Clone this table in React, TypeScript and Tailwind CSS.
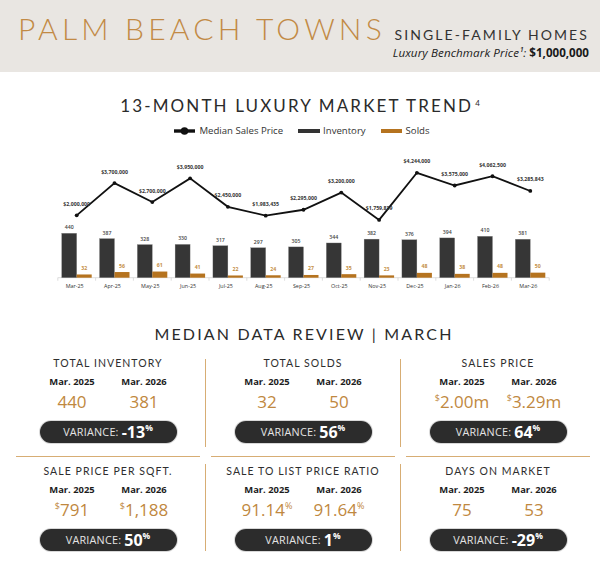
import React from "react";

const months = ["Mar-25", "Apr-25", "May-25", "Jun-25", "Jul-25", "Aug-25", "Sep-25", "Oct-25", "Nov-25", "Dec-25", "Jan-26", "Feb-26", "Mar-26"];
const prices = [2000000, 3700000, 2700000, 3950000, 2450000, 1983435, 2295000, 3200000, 1759839, 4244000, 3575000, 4062500, 3285843];
const inventory = [440, 387, 328, 330, 317, 297, 305, 344, 382, 376, 394, 410, 381];
const solds = [32, 56, 61, 41, 22, 24, 27, 35, 23, 48, 38, 48, 50];

const base = 277.7;
const cx = (i: number) => 76.7 + 37.8 * i;
const py = (v: number) => 253.3 - (v / 1000000) * 18.97;
const bh = (v: number) => v * 0.101;
const money = (v: number) => "$" + v.toLocaleString("en-US");

function TrendChart() {
  const pts = prices.map((p, i) => `${cx(i)},${py(p)}`).join(" ");
  return (
    <svg width={600} height={160} viewBox="0 137 600 160" className="block">
      <line x1={57.8} x2={549.2} y1={base} y2={base} stroke="#d4d4d4" strokeWidth={0.8} />
      {months.map((_, i) => (
        <line key={"t" + i} x1={cx(i) - 18.9} x2={cx(i) - 18.9} y1={base} y2={base + 3} stroke="#d4d4d4" strokeWidth={0.8} />
      ))}
      <line x1={549.2} x2={549.2} y1={base} y2={base + 3} stroke="#d4d4d4" strokeWidth={0.8} />
      {inventory.map((v, i) => (
        <g key={"i" + i}>
          <rect x={cx(i) - 15} y={base - bh(v)} width={15} height={bh(v)} fill="#363636" stroke="#8a8a8a" strokeWidth={0.3} />
          <text x={cx(i) - 7.5} y={base - bh(v) - 4} textAnchor="middle" fontSize={5.2} fontWeight={600} fill="#444" fontFamily="'Open Sans', sans-serif">{v}</text>
        </g>
      ))}
      {solds.map((v, i) => (
        <g key={"s" + i}>
          <rect x={cx(i)} y={base - bh(v)} width={15} height={bh(v)} fill="#b5731f" />
          <text x={cx(i) + 7.5} y={base - bh(v) - 4.5} textAnchor="middle" fontSize={5.2} fontWeight={700} fill="#c48e45" fontFamily="'Open Sans', sans-serif">{v}</text>
        </g>
      ))}
      <polyline points={pts} fill="none" stroke="#111" strokeWidth={1.8} strokeLinejoin="miter" />
      {prices.map((p, i) => (
        <g key={"p" + i}>
          <circle cx={cx(i)} cy={py(p)} r={1.9} fill="#111" />
          <text x={cx(i)} y={py(p) - 9.5} textAnchor="middle" fontSize={5.2} fontWeight={700} fill="#333" fontFamily="'Open Sans', sans-serif">{money(p)}</text>
        </g>
      ))}
      {months.map((m, i) => (
        <text key={"m" + i} x={cx(i) - 2} y={287.6} textAnchor="middle" fontSize={5.4} fill="#333" fontFamily="'Open Sans', sans-serif">{m}</text>
      ))}
    </svg>
  );
}

function Legend() {
  return (
    <div className="flex h-[12px] items-center justify-center gap-[15px] pl-[4px] font-['Open_Sans',sans-serif] text-[9.6px] leading-[12px] text-[#333]">
      <div className="flex items-center gap-[4px]">
        <svg width={21} height={8} viewBox="0 0 21 8">
          <rect x={0} y={2.3} width={21} height={3.4} fill="#111" />
          <circle cx={10.5} cy={4} r={3.8} fill="#111" />
        </svg>
        <span>Median Sales Price</span>
      </div>
      <div className="flex items-center gap-[3px]">
        <span className="h-[4px] w-[22px] bg-[#333]" />
        <span>Inventory</span>
      </div>
      <div className="flex items-center gap-[4px]">
        <span className="h-[4px] w-[21px] bg-[#b5731f]" />
        <span>Solds</span>
      </div>
    </div>
  );
}

type Stat = {
  label: string;
  a: React.ReactNode;
  b: React.ReactNode;
  variance: string;
};

const Sup = ({ children }: { children: React.ReactNode }) => (
  <span className="relative top-[-7px] text-[9px]">{children}</span>
);

const stats: Stat[] = [
  { label: "TOTAL INVENTORY", a: "440", b: "381", variance: "-13" },
  { label: "TOTAL SOLDS", a: "32", b: "50", variance: "56" },
  { label: "SALES PRICE", a: <><Sup>$</Sup>2.00m</>, b: <><Sup>$</Sup>3.29m</>, variance: "64" },
  { label: "SALE PRICE PER SQFT.", a: <><Sup>$</Sup>791</>, b: <><Sup>$</Sup>1,188</>, variance: "50" },
  { label: "SALE TO LIST PRICE RATIO", a: <>91.14<Sup>%</Sup></>, b: <>91.64<Sup>%</Sup></>, variance: "1" },
  { label: "DAYS ON MARKET", a: "75", b: "53", variance: "-29" },
];

function StatCell({ s }: { s: Stat }) {
  return (
    <div className="flex w-[184px] flex-col items-center">
      <div className="h-[14px] whitespace-nowrap font-['Lato',sans-serif] text-[10.5px] leading-[14px] tracking-[0.1em] text-[#2e2e2e]">{s.label}</div>
      <div className="mt-[6px] flex h-[12px] w-[144px] font-['Open_Sans',sans-serif] text-[9.4px] font-bold leading-[12px] text-[#1c1c1c]">
        <span className="w-[72px] text-center">Mar. 2025</span>
        <span className="w-[72px] text-center">Mar. 2026</span>
      </div>
      <div className="mt-[4px] flex h-[20px] w-[144px] font-['Open_Sans',sans-serif] text-[17px] font-normal leading-[20px] text-[#bf8840]">
        <span className="w-[72px] whitespace-nowrap text-center">{s.a}</span>
        <span className="w-[72px] whitespace-nowrap text-center">{s.b}</span>
      </div>
      <div className="mt-[9px] flex h-[22px] w-[137px] items-center justify-center rounded-full bg-[#2c2c2c] font-['Open_Sans',sans-serif] shadow-[0_0_0_1px_#d8d8d8]">
        <span className="text-[10.8px] tracking-[0.02em] text-[#e4e4e4]">VARIANCE:&nbsp;</span>
        <span className="text-[16px] font-bold leading-[22px] text-white">{s.variance}</span>
        <span className="relative top-[-4px] text-[8.5px] font-bold text-white">%</span>
      </div>
    </div>
  );
}

const VSep = ({ className }: { className: string }) => <div className={`w-[1px] bg-[#d7ad74] ${className}`} />;

export default function App() {
  return (
    <div className="h-[567px] w-[600px] overflow-hidden bg-white">
      <header className="flex h-[72px] items-baseline justify-between bg-[#e9e6e2] pl-[18px] pr-[11px] pt-[10px]">
        <h1 className="font-['Lato',sans-serif] text-[30px] font-light leading-[36px] tracking-[0.14em] text-[#c28a45]">PALM BEACH TOWNS</h1>
        <div className="text-right">
          <div className="font-['Lato',sans-serif] text-[14px] leading-[18px] tracking-[0.15em] text-[#333]">SINGLE-FAMILY HOMES</div>
          <div className="mt-[2px] whitespace-nowrap font-['Open_Sans',sans-serif] text-[11.6px] leading-[14px] text-[#1a1a1a]">
            <span className="italic tracking-[0.01em]">Luxury Benchmark Price¹: </span>
            <span className="font-bold">$1,000,000</span>
          </div>
        </div>
      </header>

      <h2 className="mt-[24px] h-[20px] text-center font-['Lato',sans-serif] text-[17px] leading-[20px] tracking-[0.125em] text-[#2b2b2b]">
        13-MONTH LUXURY MARKET TREND<span className="relative top-[-6px] ml-[2px] text-[8px] tracking-normal">4</span>
      </h2>
      <div className="mt-[9px]">
        <Legend />
      </div>
      <TrendChart />

      <h2 className="mt-[27px] h-[20px] pl-[8px] text-center font-['Lato',sans-serif] text-[16px] leading-[20px] tracking-[0.135em] text-[#2b2b2b]">
        MEDIAN DATA REVIEW | MARCH
      </h2>

      <div className="ml-[16px] mt-[12px] w-[574px]">
        <div className="flex justify-between">
          <StatCell s={stats[0]} />
          <VSep className="mt-[3px] h-[88px]" />
          <StatCell s={stats[1]} />
          <VSep className="mt-[3px] h-[88px]" />
          <StatCell s={stats[2]} />
        </div>
        <div className="mt-[9px] flex justify-between">
          <div className="h-[1px] w-[184px] bg-[#d7ad74]" />
          <div className="h-[1px] w-[184px] bg-[#d7ad74]" />
          <div className="h-[1px] w-[184px] bg-[#d7ad74]" />
        </div>
        <div className="mt-[7px] flex justify-between">
          <StatCell s={stats[3]} />
          <VSep className="h-[87px]" />
          <StatCell s={stats[4]} />
          <VSep className="h-[87px]" />
          <StatCell s={stats[5]} />
        </div>
      </div>
    </div>
  );
}
